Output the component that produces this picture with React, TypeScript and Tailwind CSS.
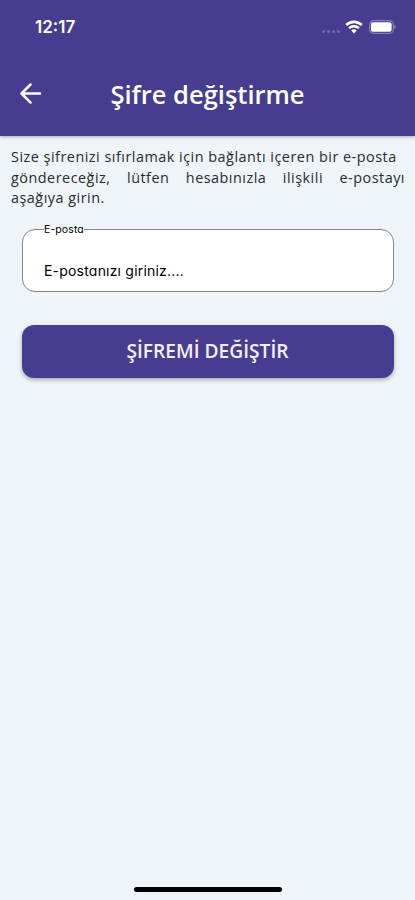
import React from 'react';

function WifiIcon() {
  return (
    <svg width="18" height="14" viewBox="0 0 18 14" fill="none" stroke="#fff">
      <path d="M1.2 5A11.2 11.2 0 0 1 16.8 5" strokeWidth="2.6" />
      <path d="M4.1 8.2a7 7 0 0 1 9.8 0" strokeWidth="2.4" />
      <path d="M9 13.4 6.2 10.6a4 4 0 0 1 5.6 0Z" fill="#fff" stroke="none" />
    </svg>
  );
}

function BatteryIcon() {
  return (
    <svg width="27" height="14" viewBox="0 0 27 14" fill="none">
      <rect x="0.7" y="0.7" width="23.6" height="12.6" rx="3.8" stroke="#fff" strokeOpacity="0.35" strokeWidth="1.2" />
      <rect x="2" y="2.2" width="20.6" height="9.6" rx="2" fill="#fff" />
      <path d="M25.4 5v4c.8-.4 1.2-1.1 1.2-2s-.4-1.6-1.2-2Z" fill="#fff" fillOpacity="0.5" />
    </svg>
  );
}

function StatusBar() {
  return (
    <div className="flex h-[54px] items-center justify-between pl-[35px] pr-[19px]">
      <span className="font-['Inter',sans-serif] text-[17px] leading-5 font-semibold">12:17</span>
      <div className="flex items-center">
        <div className="mr-[5px] mt-[8px] flex gap-[2px]">
          {[0, 1, 2, 3].map((dot) => (
            <span key={dot} className="h-[3px] w-[3px] rounded-full bg-white/25" />
          ))}
        </div>
        <WifiIcon />
        <div className="ml-[6px]">
          <BatteryIcon />
        </div>
      </div>
    </div>
  );
}

function Header() {
  return (
    <header className="h-[136px] bg-[#463c90] text-white shadow-[0_1px_3px_rgba(0,0,0,0.3)]">
      <StatusBar />
      <div className="grid h-[80px] grid-cols-[60px_1fr_60px] items-center">
        <button className="pl-[19px]" aria-label="Geri">
          <svg width="23" height="22" viewBox="0 0 23 22" fill="none" stroke="#fff" strokeWidth="2.5" strokeLinecap="round" strokeLinejoin="round">
            <path d="M21 10.5H2.5M11.5 1.5l-9 9 9 9" />
          </svg>
        </button>
        <h1 className="text-center text-[25.5px] leading-9 font-semibold whitespace-nowrap">Şifre değiştirme</h1>
      </div>
    </header>
  );
}

export default function App() {
  return (
    <div className="flex h-[900px] w-[415px] flex-col overflow-hidden bg-[#eef4f7] font-['Open_Sans','Noto_Sans',sans-serif]">
      <Header />

      <main className="flex-1">
        <p className="mt-[11px] ml-[11px] w-[394px] text-[14.4px] leading-[20.5px] font-medium tracking-[0.5px] text-[#2b2b2d]">
          <span className="block w-[385.5px] whitespace-nowrap [text-align-last:justify]">
            Size şifrenizi sıfırlamak için bağlantı içeren bir e-posta
          </span>
          <span className="block [text-align-last:justify]">göndereceğiz, lütfen hesabınızla ilişkili e-postayı</span>
          <span className="block">aşağıya girin.</span>
        </p>

        <div className="relative mx-[21.5px] mt-[20px] h-[63.5px] rounded-[13px] border border-[#85868a] bg-white font-['Inter',sans-serif] text-black [font-feature-settings:'cv11'_1]">
          {/* Floating label cuts through the top border */}
          <span className="absolute -top-[1px] left-[21px] h-[1px] w-[40px] bg-white" />
          <span className="absolute -top-[7px] left-[21.5px] text-[10.5px] leading-[14px] tracking-[0.1px]">E-posta</span>
          <div className="pt-[31px] pl-[21.5px] text-[14px] leading-5 tracking-[0.2px]">E-postanızı giriniz....</div>
        </div>

        <button className="mx-[21.5px] mt-[32.5px] flex h-[53.5px] w-[372px] items-center justify-center rounded-[12px] bg-[#463c90] text-[19.2px] font-semibold text-[#f4f1fc] shadow-[0_2px_4px_rgba(0,0,0,0.3)]">
          ŞİFREMİ DEĞİŞTİR
        </button>
      </main>

      <div className="mx-auto mb-[8px] h-[5px] w-[148px] rounded-full bg-black" />
    </div>
  );
}
